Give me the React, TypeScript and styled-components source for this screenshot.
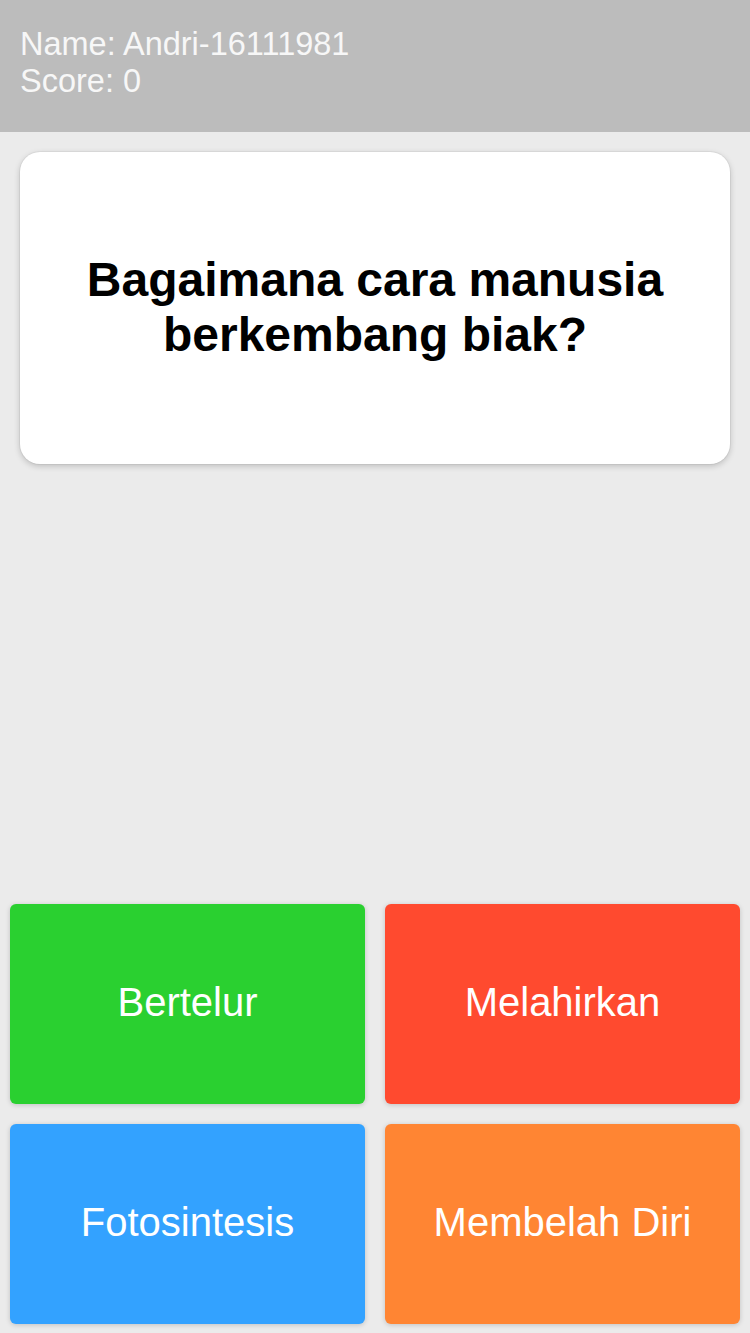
import styled, { createGlobalStyle } from "styled-components";

const answers = [
  { label: "Bertelur", color: "#2ad030" },
  { label: "Melahirkan", color: "#ff4a2f" },
  { label: "Fotosintesis", color: "#33a2ff" },
  { label: "Membelah Diri", color: "#ff8533" },
];

export default function App() {
  return (
    <Page>
      <GlobalStyle />
      <Header>
        <Line>Name: Andri-16111981</Line>
        <Line>Score: 0</Line>
      </Header>
      <QuestionCard>
        <Question>Bagaimana cara manusia berkembang biak?</Question>
      </QuestionCard>
      <Spacer />
      <Answers>
        {answers.map((a) => (
          <AnswerButton key={a.label} $bg={a.color}>
            {a.label}
          </AnswerButton>
        ))}
      </Answers>
    </Page>
  );
}

const GlobalStyle = createGlobalStyle`
  html, body {
    margin: 0;
    padding: 0;
    background: #ebebeb;
    font-family: "Liberation Sans", Arial, sans-serif;
  }
  * {
    box-sizing: border-box;
  }
`;

const Page = styled.div`
  display: flex;
  flex-direction: column;
  min-height: 100vh;
  background-color: #ebebeb;
`;

const Header = styled.div`
  height: 132px;
  padding: 26px 20px 0;
  background-color: #bcbcbc;
  color: #f7f7f7;
  font-size: 32.5px;
`;

const Line = styled.div`
  line-height: 37px;
`;

const QuestionCard = styled.div`
  display: flex;
  align-items: center;
  justify-content: center;
  height: 312px;
  margin: 20px 20px 0;
  padding: 0 40px 3px;
  background-color: #ffffff;
  border-radius: 20px;
  box-shadow: 0 0 0 1px rgba(0, 0, 0, 0.04), 0 2px 6px rgba(0, 0, 0, 0.2);
`;

const Question = styled.h1`
  margin: 0;
  font-size: 48px;
  line-height: 55px;
  font-weight: bold;
  text-align: center;
  color: #000;
`;

const Spacer = styled.div`
  flex: 1;
`;

const Answers = styled.div`
  display: grid;
  grid-template-columns: 1fr 1fr;
  gap: 20px;
  padding: 10px;
  padding-bottom: 9px;
`;

const AnswerButton = styled.button<{ $bg: string }>`
  height: 200px;
  padding: 0 0 4px;
  border: none;
  border-radius: 6px;
  background-color: ${(p) => p.$bg};
  color: #fff;
  font-family: "Liberation Sans", Arial, sans-serif;
  font-size: 40px;
  box-shadow: 0 1px 5px rgba(0, 0, 0, 0.18);
  cursor: pointer;
`;
